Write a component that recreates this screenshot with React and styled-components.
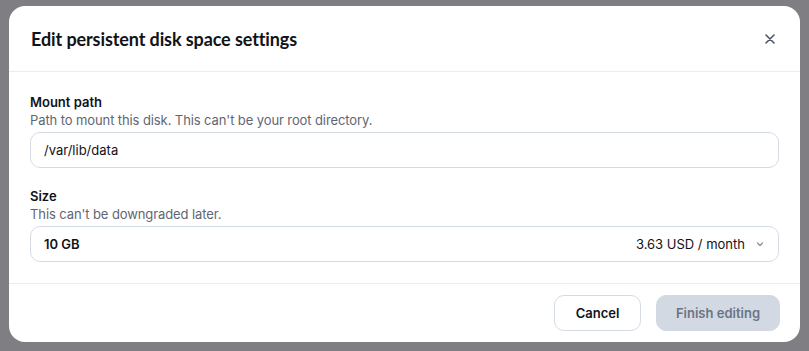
import styled, { createGlobalStyle } from 'styled-components';

const GlobalStyle = createGlobalStyle`
  html, body {
    margin: 0;
    padding: 0;
    background: #7f7f83;
  }
  body {
    font-family: Inter, "Noto Sans", sans-serif;
    color: #111318;
  }
`;

const Backdrop = styled.div`
  width: 809px;
  height: 351px;
  padding: 6px 9px 9px 9px;
  box-sizing: border-box;
  background: #7f7f83;
`;

const Modal = styled.div`
  width: 791px;
  height: 336px;
  background: #fff;
  border-radius: 16px;
  display: flex;
  flex-direction: column;
  overflow: hidden;
`;

const Header = styled.div`
  height: 66px;
  flex-shrink: 0;
  box-sizing: border-box;
  display: flex;
  align-items: center;
  justify-content: space-between;
  padding: 0 22px 0 22px;
  border-bottom: 1px solid #ececee;
`;

const Title = styled.h2`
  margin: 0;
  font-family: Lato, "Open Sans", sans-serif;
  font-size: 18px;
  font-weight: 700;
  letter-spacing: -0.1px;
  color: #111318;
`;

const CloseButton = styled.button`
  border: none;
  background: none;
  padding: 0;
  width: 16px;
  height: 16px;
  display: flex;
  align-items: center;
  justify-content: center;
  cursor: pointer;
`;

const Body = styled.div`
  flex: 1;
  box-sizing: border-box;
  padding: 21px 21px 0 21px;
  display: flex;
  flex-direction: column;
  gap: 19px;
  border-bottom: 1px solid #ececee;
`;

const Field = styled.div`
  display: flex;
  flex-direction: column;
`;

const Label = styled.div`
  font-size: 13px;
  font-weight: 600;
  line-height: 18px;
  color: #111318;
`;

const Hint = styled.div`
  font-size: 13px;
  line-height: 18px;
  letter-spacing: -0.1px;
  color: #5f6673;
  margin-bottom: 3px;
`;

const Input = styled.div`
  height: 36px;
  box-sizing: border-box;
  border: 1px solid #d5dbe3;
  border-radius: 10px;
  padding: 0 13px;
  display: flex;
  align-items: center;
  justify-content: space-between;
  font-size: 13px;
  font-weight: ${(p) => (p.$bold ? 600 : 400)};
  color: #111318;
`;

const Price = styled.span`
  display: flex;
  align-items: center;
  gap: 10px;
  font-weight: 400;
`;

const Footer = styled.div`
  height: 58px;
  flex-shrink: 0;
  box-sizing: border-box;
  display: flex;
  justify-content: flex-end;
  align-items: flex-start;
  gap: 15px;
  padding: 11px 20px 0 0;
`;

const Button = styled.button`
  height: 36px;
  box-sizing: border-box;
  border-radius: 10px;
  font-family: Inter, "Noto Sans", sans-serif;
  font-size: 13px;
  font-weight: 600;
  padding: 0;
  width: ${(p) => p.$width}px;
  border: 1px solid ${(p) => (p.$primary ? '#d2d9e3' : '#d5dbe3')};
  background: ${(p) => (p.$primary ? '#d2d9e3' : '#fff')};
  color: ${(p) => (p.$primary ? '#6b7484' : '#111318')};
`;

const Chevron = () => (
  <svg width="10" height="10" viewBox="0 0 10 10" fill="none">
    <path d="M2.5 4l2.5 2.5L7.5 4" stroke="#8a93a3" strokeWidth="1.3" strokeLinecap="round" strokeLinejoin="round" />
  </svg>
);

const CloseIcon = () => (
  <svg width="10" height="10" viewBox="0 0 10 10" fill="none">
    <path d="M1 1l8 8M9 1l-8 8" stroke="#4b5563" strokeWidth="1.6" strokeLinecap="round" />
  </svg>
);

export default function App() {
  return (
    <>
      <GlobalStyle />
      <Backdrop>
        <Modal>
          <Header>
            <Title>Edit persistent disk space settings</Title>
            <CloseButton aria-label="Close">
              <CloseIcon />
            </CloseButton>
          </Header>
          <Body>
            <Field>
              <Label>Mount path</Label>
              <Hint>Path to mount this disk. This can't be your root directory.</Hint>
              <Input>/var/lib/data</Input>
            </Field>
            <Field>
              <Label>Size</Label>
              <Hint>This can't be downgraded later.</Hint>
              <Input $bold>
                <span>10 GB</span>
                <Price>
                  3.63 USD / month
                  <Chevron />
                </Price>
              </Input>
            </Field>
          </Body>
          <Footer>
            <Button $width={87}>Cancel</Button>
            <Button $primary $width={124}>Finish editing</Button>
          </Footer>
        </Modal>
      </Backdrop>
    </>
  );
}
